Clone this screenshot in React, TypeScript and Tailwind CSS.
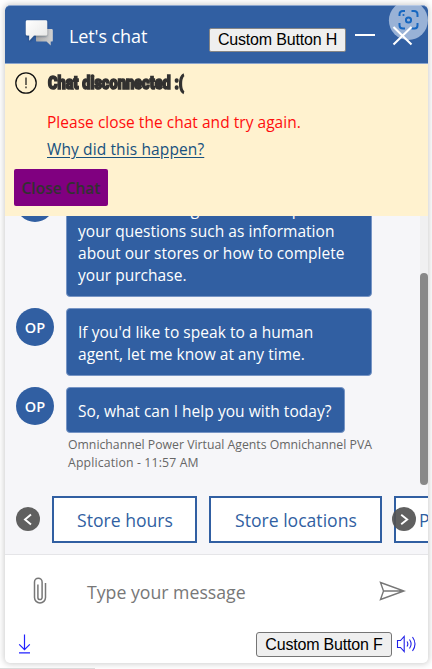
import React from "react";

const SANS = "font-['Open_Sans','Noto_Sans',sans-serif]";
const ARIAL = "font-['Liberation_Sans',Arial,sans-serif]";

function ChatLogo() {
  return (
    <svg className="ml-[20px] mt-[12px] h-[30px] w-[30px] shrink-0" viewBox="25 18 30 30">
      <defs>
        <linearGradient id="front" x1="0" y1="0" x2="1" y2="1">
          <stop offset="0" stopColor="#ffffff" />
          <stop offset="1" stopColor="#e6e6e6" />
        </linearGradient>
        <linearGradient id="back" x1="0" y1="0" x2="1" y2="0">
          <stop offset="0" stopColor="#a9a9a9" />
          <stop offset="1" stopColor="#d2d2d2" />
        </linearGradient>
        <filter id="soft" x="-30%" y="-30%" width="160%" height="160%">
          <feDropShadow dx="0" dy="1" stdDeviation="1" floodColor="#102040" floodOpacity="0.45" />
        </filter>
      </defs>
      <path d="M36 29h15.6q1.2 0 1.2 1.2v10.2q0 1.2-1.2 1.2H50.700v4L46.500 41.600H37.200q-1.200 0-1.200-1.200z" fill="url(#back)" />
      <path d="M27.200 20.200H45.800q1.400 0 1.400 1.400V34.200q0 1.400-1.400 1.400H34L29.200 40.800V35.600H27.200q-1.400 0-1.400-1.400V21.600q0-1.400 1.400-1.400z" fill="url(#front)" filter="url(#soft)" />
    </svg>
  );
}

function Header() {
  return (
    <header className="relative flex h-[59px] shrink-0 rounded-t-[5px] border-y border-[#8ba5cd] bg-[#315fa2]">
      <ChatLogo />
      <h1 className="ml-[14px] mt-[15px] w-[140px] whitespace-nowrap text-[18px] leading-[30px] tracking-[-0.1px] text-white">Let&apos;s chat</h1>
      <button className={`mt-[22px] h-[24px] w-[137px] shrink-0 whitespace-nowrap rounded-[2px] border border-[#858585] bg-[#efefef] text-[16px] leading-[20px] tracking-[-0.18px] text-black ${ARIAL}`}>
        Custom Button H
      </button>
      <svg className="absolute right-0 -top-[6px] h-[60px] w-[74px]" viewBox="354 0 74 60" fill="none">
        <path d="M355 35h20" stroke="#fff" strokeWidth="2" />
        <circle cx="408.400" cy="20.500" r="19.500" fill="#d0ddf1" fillOpacity=".66" />
        <g stroke="#1767c0" strokeWidth="2">
          <path d="M399.500 16v-1.500q0-3.500 3.500-3.500h2M411.500 11h2.500q3.500 0 3.500 3.500V17M417.500 23v2.500q0 3-3 3H411.500M405 28.500h-2q-3.500 0-3.500-3.500v-2" />
          <circle cx="408.500" cy="20" r="2.600" />
        </g>
        <circle cx="403.500" cy="15" r="1.100" fill="#1767c0" />
        <path d="m393.500 27 18 17.500m0-17.500-18 17.500" stroke="#fff" strokeWidth="2.100" />
      </svg>
    </header>
  );
}

function Banner() {
  return (
    <section className="flex h-[152px] shrink-0 flex-col bg-[#fff2cf]">
      <div className="flex h-[38px] items-center">
        <svg className="ml-[9px] h-[24px] w-[24px] shrink-0" viewBox="0 0 24 24" fill="none" stroke="#111">
          <circle cx="12" cy="12" r="10.200" strokeWidth="1.300" />
          <path d="M12 6.500v7.500m0 1.500v1.800" strokeWidth="1.200" />
        </svg>
        <strong className="ml-[10px] inline-block origin-left scale-x-[0.81] whitespace-nowrap font-['Roboto',sans-serif] text-[18px] font-black leading-[24px] text-[#323130] [-webkit-text-stroke:1.6px_#323130]">
          Chat disconnected :(
        </strong>
      </div>
      <p className="ml-[42px] mt-[8px] whitespace-nowrap text-[15.5px] leading-[24px] tracking-[0.03px] text-[#ff0d0d]">Please close the chat and try again.</p>
      <a className="ml-[42px] mt-[3px] self-start whitespace-nowrap text-[15.5px] leading-[24px] tracking-[0.12px] text-[#17517e] underline underline-offset-2">Why did this happen?</a>
      <button className="ml-[9px] mt-[8px] h-[37px] w-[94px] whitespace-nowrap rounded-[2px] bg-[#800080] pt-[2px] text-[15.5px] font-semibold text-[#323130]">
        Close Chat
      </button>
    </section>
  );
}

function Message({ lines, size }: { lines: string[]; size: string }) {
  return (
    <div className="flex">
      <div className="ml-[11px] flex h-[38px] w-[38px] shrink-0 items-center justify-center rounded-full bg-[#315fa2] pt-px text-[14.5px] font-semibold text-white">OP</div>
      <div className={`ml-[12px] flex flex-col justify-end rounded-[4px] border border-[#7795c5] bg-[#315fa2] pb-[10px] pl-[11px] text-[15.5px] leading-[22px] tracking-[0.04px] text-white ${size}`}>
        {lines.map((line) => (
          <span key={line} className="whitespace-nowrap">{line}</span>
        ))}
      </div>
    </div>
  );
}

function Arrow({ right = false }: { right?: boolean }) {
  return (
    <svg className="h-[24px] w-[24px]" viewBox="0 0 24 24" fill="none">
      <circle cx="12" cy="12" r="12" fill={right ? "#525252" : "#606060"} fillOpacity={right ? 0.92 : 1} />
      <path d={right ? "m9.200 7.700 6 4.800-6 4.800" : "m15 7.500-6 5 6 5"} stroke="#fff" strokeWidth="1.900" />
    </svg>
  );
}

function Choice({ label, size }: { label: string; size: string }) {
  return (
    <button className={`h-[47px] shrink-0 whitespace-nowrap border-2 border-[#315fa2] bg-white pt-px text-left text-[17.6px] text-[#315fa2] ${size}`}>{label}</button>
  );
}

function Transcript() {
  return (
    <main className="relative flex h-[338px] shrink-0 flex-col overflow-hidden bg-[#f6f6f9]">
      <div className="-mt-[32px] flex flex-col">
        <Message
          lines={["I'm the virtual agent. I can help with", "your questions such as information", "about our stores or how to complete", "your purchase."]}
          size="h-[113px] w-[306px]"
        />
        <div className="mt-[11px]">
          <Message lines={["If you'd like to speak to a human", "agent, let me know at any time."]} size="h-[68px] w-[306px]" />
        </div>
        <div className="mt-[11px]">
          <Message lines={["So, what can I help you with today?"]} size="h-[46px] w-[279px]" />
        </div>
      </div>
      <p className="ml-[63px] mt-[3px] text-[12.25px] leading-[17.500px] text-[#666]">
        <span className="block whitespace-nowrap">Omnichannel Power Virtual Agents Omnichannel PVA</span>
        <span className="block whitespace-nowrap tracking-[0.15px]">Application - 11:57 AM</span>
      </p>
      <div className="ml-[47px] mt-[25px] flex gap-[12px]">
        <Choice label="Store hours" size="w-[145px] pl-[23px]" />
        <Choice label="Store locations" size="w-[173px] pl-[24px]" />
        <Choice label="Product help" size="w-[160px] pl-[23px]" />
      </div>
      <div className="absolute left-[11px] top-[291px]"><Arrow /></div>
      <div className="absolute left-[387px] top-[291px]"><Arrow right /></div>
      <div className="absolute right-0 top-0 h-[269px] w-[8px] bg-[#f0f0f1]">
        <div className="mt-[57px] h-[212px] w-[8px] rounded-[4px] bg-[#888]" />
      </div>
    </main>
  );
}

function Footer() {
  return (
    <footer className="flex grow flex-col border-t border-[#e5e5e8]">
      <div className="flex h-[73px] items-center">
        <svg className="-mt-[2px] ml-[28px] h-[28px] w-[14px] shrink-0" viewBox="0 0 14 28" fill="none" stroke="#777" strokeWidth="1.500">
          <path d="M12.500 6v14.500a5.500 5.500 0 0 1-11 0V5a3.800 3.800 0 0 1 7.600 0v15.500a2.100 2.100 0 0 1-4.200 0V7.500" />
        </svg>
        <span className="ml-[40px] w-[292px] whitespace-nowrap text-[17.7px] leading-[28px] text-[#777]">Type your message</span>
        <svg className="mt-[-2px] h-[20px] w-[27px] shrink-0" viewBox="0 0 27 20" fill="none" stroke="#777" strokeWidth="1.400">
          <path d="M1.500 1.500 25 10 1.500 18.500 4.500 10zM4.500 10H25" />
        </svg>
      </div>
      <div className="flex h-[34px]">
        <svg className="ml-[13px] mt-[6px] h-[21px] w-[13px] shrink-0" viewBox="0 0 13 21" fill="none" stroke="#2020ff" strokeWidth="1.200">
          <path d="M6.500 .500v15m-5.300-5.200 5.300 5.300 5.300-5.300M1 18.800h11" />
        </svg>
        <button className={`ml-[225px] mt-[4px] h-[25px] w-[136px] shrink-0 whitespace-nowrap rounded-[3px] border border-[#757575] bg-[#efefef] text-[16px] leading-[22px] tracking-[-0.18px] text-black ${ARIAL}`}>
          Custom Button F
        </button>
        <svg className="ml-[4px] mt-[7px] h-[18px] w-[21px] shrink-0" viewBox="0 0 21 18" fill="none" stroke="#2020e8" strokeWidth="1.100">
          <path d="M1.500 5.500h3l3.700-4v15l-3.700-4h-3zM11 6.500q1.700 2.500 0 5M13.500 4.500q3.200 4.500 0 9M16.500 2q5 7 0 14" />
        </svg>
      </div>
    </footer>
  );
}

export default function App() {
  return (
    <div className={`relative h-[669px] w-[432px] overflow-hidden bg-white pl-[5px] pt-[5px] ${SANS}`}>
      <div className="flex h-[658px] w-[423px] flex-col overflow-hidden rounded-[5px] bg-white shadow-[0_0_6px_1px_rgba(0,0,0,0.2)]">
        <Header />
        <Banner />
        <Transcript />
        <Footer />
      </div>
      <div className="absolute bottom-0 left-0 h-px w-[95px] bg-[#dadada]" />
    </div>
  );
}
